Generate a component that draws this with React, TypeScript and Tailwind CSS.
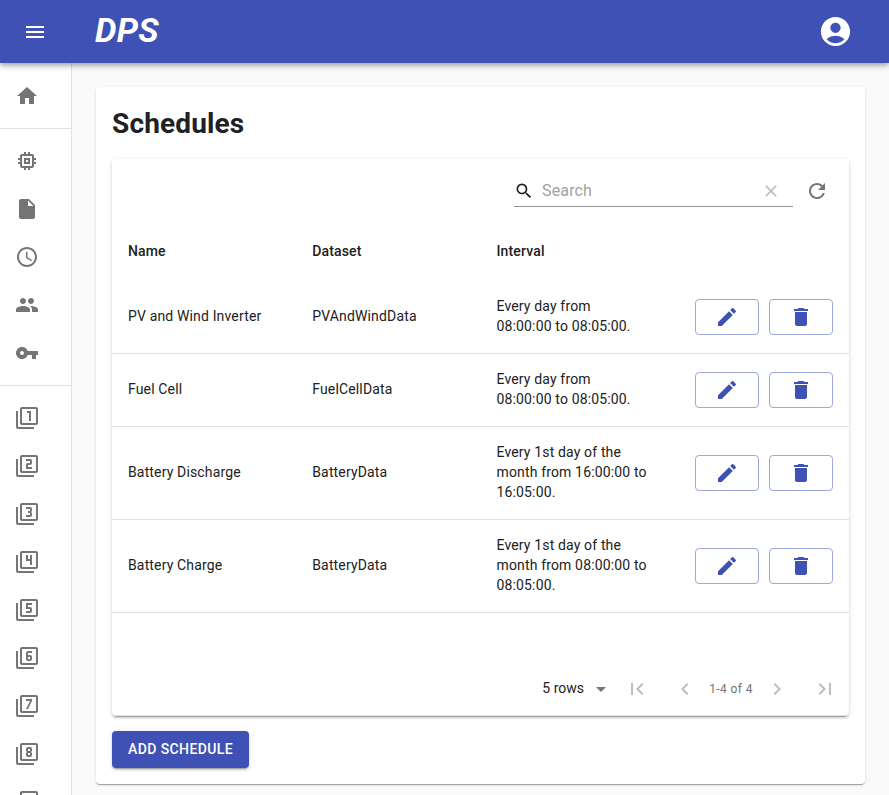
import React from 'react';
import {
  MdAccountCircle, MdArrowDropDown, MdChevronLeft, MdChevronRight, MdClear, MdDelete, MdEdit,
  MdFilter1, MdFilter2, MdFilter3, MdFilter4, MdFilter5, MdFilter6, MdFilter7, MdFilter8, MdFilter9,
  MdFirstPage, MdHome, MdInsertDriveFile, MdLastPage, MdMemory, MdMenu, MdPeople, MdRefresh,
  MdSchedule, MdSearch, MdVpnKey,
} from 'react-icons/md';
import type { IconType } from 'react-icons';

const navGroups: IconType[][] = [
  [MdHome],
  [MdMemory, MdInsertDriveFile, MdSchedule, MdPeople, MdVpnKey],
  [MdFilter1, MdFilter2, MdFilter3, MdFilter4, MdFilter5, MdFilter6, MdFilter7, MdFilter8, MdFilter9],
];

const rows = [
  { name: 'PV and Wind Inverter', dataset: 'PVAndWindData', interval: ['Every day from', '08:00:00 to 08:05:00.'] },
  { name: 'Fuel Cell', dataset: 'FuelCellData', interval: ['Every day from', '08:00:00 to 08:05:00.'] },
  { name: 'Battery Discharge', dataset: 'BatteryData', interval: ['Every 1st day of the', 'month from 16:00:00 to', '16:05:00.'] },
  { name: 'Battery Charge', dataset: 'BatteryData', interval: ['Every 1st day of the', 'month from 08:00:00 to', '08:05:00.'] },
];

function Header() {
  return (
    <header className="relative z-10 flex h-[63px] shrink-0 items-center bg-[#3f51b5] pr-9 pl-[23px] text-white shadow-[0_2px_4px_-1px_rgba(0,0,0,0.2),0_4px_5px_0_rgba(0,0,0,0.14),0_1px_10px_0_rgba(0,0,0,0.12)]">
      <MdMenu size={24} />
      <h1 className="mb-[3px] ml-12 grow text-[34px] leading-[40px] font-bold tracking-[0.25px] italic">DPS</h1>
      <MdAccountCircle size={35} />
    </header>
  );
}

function Sidebar() {
  return (
    <nav className="w-[72px] shrink-0 overflow-hidden border-r border-[#e0e0e0] bg-white pt-px">
      {navGroups.map((group, i) => (
        <ul key={i} className="border-b border-[#e0e0e0] py-2">
          {group.map((Icon, j) => (
            <li key={j} className="flex h-12 items-center pl-[15px] text-[#757575]">
              <Icon size={24} />
            </li>
          ))}
        </ul>
      ))}
    </nav>
  );
}

function ActionButton({ icon: Icon }: { icon: IconType }) {
  return (
    <button className="flex h-9 w-16 items-center justify-center rounded border border-[#9fa8da] text-[#3f51b5]">
      <Icon size={24} />
    </button>
  );
}

function Toolbar() {
  return (
    <div className="flex h-16 items-center justify-end pr-5">
      <div className="flex h-8 w-[279px] items-center border-b border-[#949494]">
        <MdSearch size={20} />
        <span className="ml-2 grow text-base tracking-[0.15px] text-[#a2a2a2]">Search</span>
        <MdClear size={20} className="mr-3 text-[#bdbdbd]" />
      </div>
      <MdRefresh size={24} className="ml-3 text-[#757575]" />
    </div>
  );
}

function ScheduleTable() {
  return (
    <div className="tracking-[0.15px]">
      <div className="grid h-[58px] grid-cols-4 items-center pb-0.5 font-medium">
        <span className="pl-4">Name</span>
        <span className="pl-4">Dataset</span>
        <span className="pl-4">Interval</span>
      </div>
      {rows.map((row) => (
        <div key={row.name} className="grid grid-cols-4 items-center border-b border-[#e0e0e0] pt-[15px] pb-[17px]">
          <span className="pl-4">{row.name}</span>
          <span className="pl-4">{row.dataset}</span>
          <div className="pl-4 whitespace-nowrap">
            {row.interval.map((line) => <p key={line}>{line}</p>)}
          </div>
          <div className="flex justify-end gap-2.5 pt-0.5 pr-4">
            <ActionButton icon={MdEdit} />
            <ActionButton icon={MdDelete} />
          </div>
        </div>
      ))}
    </div>
  );
}

function Pagination() {
  return (
    <div className="flex h-[53px] items-center justify-end rounded-b border-b border-[#e0e0e0] pr-3 text-[#bdbdbd]">
      <span className="pb-0.5 text-[#212121]">5 rows</span>
      <MdArrowDropDown size={24} className="ml-[5px] text-[#757575]" />
      <MdFirstPage size={24} className="ml-3" />
      <MdChevronLeft size={24} className="ml-6" />
      <span className="w-[68px] text-center text-xs tracking-[0.4px] text-[#757575]">1-4 of 4</span>
      <MdChevronRight size={24} />
      <MdLastPage size={24} className="ml-6" />
    </div>
  );
}

export default function App() {
  return (
    <div className="flex h-[795px] w-[889px] flex-col overflow-hidden bg-[#fafafa] font-[Roboto,sans-serif] text-sm leading-5 text-[#212121]">
      <Header />
      <div className="flex min-h-0 grow">
        <Sidebar />
        <main className="grow px-6 pt-6">
          <section className="h-[697px] rounded bg-white px-4 pt-[17px] shadow-[0_2px_1px_-1px_rgba(0,0,0,0.2),0_1px_1px_0_rgba(0,0,0,0.14),0_1px_3px_0_rgba(0,0,0,0.12)]">
            <h2 className="mb-[15px] text-[28px] leading-10 font-bold tracking-[0.15px]">Schedules</h2>
            <div className="flex h-[557px] flex-col justify-between rounded bg-white shadow-[0_3px_1px_-2px_rgba(0,0,0,0.2),0_2px_2px_0_rgba(0,0,0,0.14),0_1px_5px_0_rgba(0,0,0,0.12)]">
              <div>
                <Toolbar />
                <ScheduleTable />
              </div>
              <Pagination />
            </div>
            <button className="mt-[15px] flex h-[37px] items-center rounded bg-[#3f51b5] px-4 pb-px font-medium tracking-[0.4px] text-white shadow-[0_3px_1px_-2px_rgba(0,0,0,0.2),0_2px_2px_0_rgba(0,0,0,0.14),0_1px_5px_0_rgba(0,0,0,0.12)]">
              ADD SCHEDULE
            </button>
          </section>
        </main>
      </div>
    </div>
  );
}
